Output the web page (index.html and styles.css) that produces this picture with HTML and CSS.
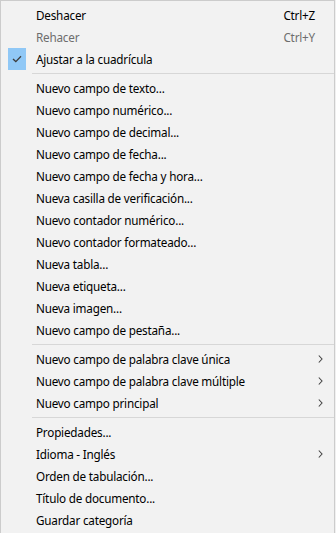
FILE: index.html
```html
<!DOCTYPE html>
<html lang="es">
<head>
  <meta charset="UTF-8">
  <title>Menú contextual</title>
  <link rel="stylesheet" href="styles.css">
</head>
<body>
<div class="menu">
  <div class="item"><span class="icon"></span><span class="label">Deshacer</span><span class="shortcut">Ctrl+Z</span><span class="sub"></span></div>
  <div class="item disabled"><span class="icon"></span><span class="label">Rehacer</span><span class="shortcut">Ctrl+Y</span><span class="sub"></span></div>
  <div class="item"><span class="icon"><span class="check"><svg width="10" height="8" viewBox="0 0 10 8"><path d="M1 4 L3.8 6.6 L9 1.2" fill="none" stroke="#3c3c3c" stroke-width="1.3"/></svg></span></span><span class="label">Ajustar a la cuadrícula</span><span class="shortcut"></span><span class="sub"></span></div>

  <div class="separator"></div>

  <div class="item"><span class="icon"></span><span class="label">Nuevo campo de texto...</span><span class="shortcut"></span><span class="sub"></span></div>
  <div class="item"><span class="icon"></span><span class="label">Nuevo campo numérico...</span><span class="shortcut"></span><span class="sub"></span></div>
  <div class="item"><span class="icon"></span><span class="label">Nuevo campo de decimal...</span><span class="shortcut"></span><span class="sub"></span></div>
  <div class="item"><span class="icon"></span><span class="label">Nuevo campo de fecha...</span><span class="shortcut"></span><span class="sub"></span></div>
  <div class="item"><span class="icon"></span><span class="label">Nuevo campo de fecha y hora...</span><span class="shortcut"></span><span class="sub"></span></div>
  <div class="item"><span class="icon"></span><span class="label">Nueva casilla de verificación...</span><span class="shortcut"></span><span class="sub"></span></div>
  <div class="item"><span class="icon"></span><span class="label">Nuevo contador numérico...</span><span class="shortcut"></span><span class="sub"></span></div>
  <div class="item"><span class="icon"></span><span class="label">Nuevo contador formateado...</span><span class="shortcut"></span><span class="sub"></span></div>
  <div class="item"><span class="icon"></span><span class="label">Nueva tabla...</span><span class="shortcut"></span><span class="sub"></span></div>
  <div class="item"><span class="icon"></span><span class="label">Nueva etiqueta...</span><span class="shortcut"></span><span class="sub"></span></div>
  <div class="item"><span class="icon"></span><span class="label">Nueva imagen...</span><span class="shortcut"></span><span class="sub"></span></div>
  <div class="item"><span class="icon"></span><span class="label">Nuevo campo de pestaña...</span><span class="shortcut"></span><span class="sub"></span></div>

  <div class="separator"></div>

  <div class="item"><span class="icon"></span><span class="label">Nuevo campo de palabra clave única</span><span class="shortcut"></span><span class="sub"><svg width="5" height="8" viewBox="0 0 5 8"><path d="M0.8 0.5 L4 4 L0.8 7.5" fill="none" stroke="#444" stroke-width="1.1"/></svg></span></div>
  <div class="item"><span class="icon"></span><span class="label">Nuevo campo de palabra clave múltiple</span><span class="shortcut"></span><span class="sub"><svg width="5" height="8" viewBox="0 0 5 8"><path d="M0.8 0.5 L4 4 L0.8 7.5" fill="none" stroke="#444" stroke-width="1.1"/></svg></span></div>
  <div class="item"><span class="icon"></span><span class="label">Nuevo campo principal</span><span class="shortcut"></span><span class="sub"><svg width="5" height="8" viewBox="0 0 5 8"><path d="M0.8 0.5 L4 4 L0.8 7.5" fill="none" stroke="#444" stroke-width="1.1"/></svg></span></div>

  <div class="separator"></div>

  <div class="item"><span class="icon"></span><span class="label">Propiedades...</span><span class="shortcut"></span><span class="sub"></span></div>
  <div class="item"><span class="icon"></span><span class="label">Idioma - Inglés</span><span class="shortcut"></span><span class="sub"><svg width="5" height="8" viewBox="0 0 5 8"><path d="M0.8 0.5 L4 4 L0.8 7.5" fill="none" stroke="#444" stroke-width="1.1"/></svg></span></div>
  <div class="item"><span class="icon"></span><span class="label">Orden de tabulación...</span><span class="shortcut"></span><span class="sub"></span></div>
  <div class="item"><span class="icon"></span><span class="label">Título de documento...</span><span class="shortcut"></span><span class="sub"></span></div>
  <div class="item"><span class="icon"></span><span class="label">Guardar categoría</span><span class="shortcut"></span><span class="sub"></span></div>
</div>
</body>
</html>
```

FILE: styles.css
```css
body {
    margin: 0;
    background: #f0f0f0;
    font-family: "Noto Sans", "DejaVu Sans", sans-serif;
    font-size: 11.7px;
    letter-spacing: -0.2px;
    color: #000;
}
.menu {
    width: 335px;
    height: 533px;
    box-sizing: border-box;
    background: #f2f2f2;
    border: 1px solid #cccccc;
    border-bottom: none;
    padding-top: 3px;
}
.item {
    display: grid;
    grid-template-columns: 35px 1fr auto 19px;
    align-items: center;
    height: 22px;
}
.icon {
    height: 22px;
}
.check {
    display: flex;
    align-items: center;
    justify-content: center;
    width: 18px;
    height: 22px;
    margin-left: 7px;
    background: #90c8f6;
}
.label {
    white-space: nowrap;
}
.shortcut {
    white-space: nowrap;
}
.sub {
    display: flex;
    align-items: center;
    padding-left: 3px;
}
.disabled {
    color: #6d6d6d;
}
.separator {
    height: 1px;
    margin: 3px 0 3px 31px;
    background: #d7d7d7;
}
```
